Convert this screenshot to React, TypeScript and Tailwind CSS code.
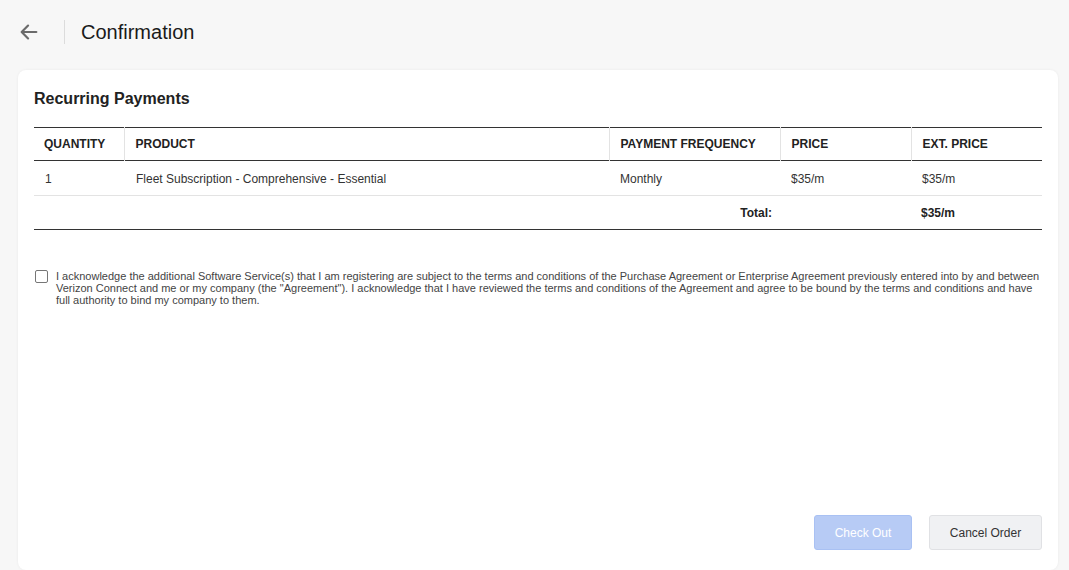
import React from 'react';

const rows = [
  { qty: '1', product: 'Fleet Subscription - Comprehensive - Essential', freq: 'Monthly', price: '$35/m', ext: '$35/m' },
];

const ArrowLeft: React.FC = () => (
  <svg width="22" height="22" viewBox="0 0 24 24" fill="none" stroke="#6b6b6b" strokeWidth="2.4" strokeLinecap="round" strokeLinejoin="round">
    <path d="M20 12H4.5" />
    <path d="M11 5l-7 7 7 7" />
  </svg>
);

export default function App() {
  return (
    <div className="min-h-[570px] h-[570px] bg-[#f7f7f7] pl-[18px] pr-[11px] flex flex-col overflow-hidden" style={{ fontFamily: '"Liberation Sans", Arial, sans-serif' }}>
      {/* header */}
      <div className="h-[64px] flex items-center shrink-0">
        <button className="w-[22px] h-[22px] flex items-center justify-center">
          <ArrowLeft />
        </button>
        <div className="w-px h-[24px] bg-[#dcdcdc] ml-[24px] mr-[16px]" />
        <h1 className="text-[20px] text-[#1a1a1a] leading-none">Confirmation</h1>
      </div>

      {/* card */}
      <div className="mt-[6px] flex-1 bg-white rounded-[8px] shadow-[0_0_3px_rgba(0,0,0,0.06)] px-[16px] pt-[19px] pb-[20px] flex flex-col">
        <h2 className="text-[16px] font-bold text-[#222] leading-[20px]">Recurring Payments</h2>

        <table className="w-full mt-[18px] border-collapse text-[12px] text-[#333]">
          <thead>
            <tr className="border-t border-b border-[#333] h-[33px]">
              <th className="w-[90px] text-left font-bold text-[#222] pl-[10px] border-r border-[#e3e3e3]">QUANTITY</th>
              <th className="w-[485px] text-left font-bold text-[#222] pl-[11px] border-r border-[#e3e3e3]">PRODUCT</th>
              <th className="w-[171px] text-left font-bold text-[#222] pl-[11px] border-r border-[#e3e3e3]">PAYMENT FREQUENCY</th>
              <th className="w-[131px] text-left font-bold text-[#222] pl-[11px] border-r border-[#e3e3e3]">PRICE</th>
              <th className="text-left font-bold text-[#222] pl-[11px]">EXT. PRICE</th>
            </tr>
          </thead>
          <tbody>
            {rows.map((r, i) => (
              <tr key={i} className="border-b border-[#e3e3e3] h-[35px]">
                <td className="pl-[11px] pt-[2px]">{r.qty}</td>
                <td className="pl-[12px] pt-[2px]">{r.product}</td>
                <td className="pl-[11px] pt-[2px]">{r.freq}</td>
                <td className="pl-[11px] pt-[2px]">{r.price}</td>
                <td className="pl-[11px] pt-[2px]">{r.ext}</td>
              </tr>
            ))}
            <tr className="border-b border-[#333] h-[34px]">
              <td colSpan={3} className="text-right pr-[8px] font-bold text-[#222]">Total:</td>
              <td />
              <td className="pl-[10px] font-bold text-[#222]">$35/m</td>
            </tr>
          </tbody>
        </table>

        <label className="mt-[39px] flex items-start gap-[8px]">
          <span className="mt-[1px] w-[13px] h-[13px] shrink-0 border border-[#767676] rounded-[2px] bg-white ml-[1px]" />
          <span className="text-[11px] leading-[12px] text-[#444] pt-[1px]">
            I acknowledge the additional Software Service(s) that I am registering are subject to the terms and conditions of the Purchase Agreement or Enterprise Agreement previously entered into by and between Verizon Connect and me or my company (the "Agreement"). I acknowledge that I have reviewed the terms and conditions of the Agreement and agree to be bound by the terms and conditions and have full authority to bind my company to them.
          </span>
        </label>

        <div className="mt-auto flex justify-end gap-[17px]">
          <button disabled className="w-[98px] h-[35px] rounded-[3px] bg-[#b7cbf5] border border-[#a9c1f3] text-white text-[12px]">Check Out</button>
          <button className="w-[113px] h-[35px] rounded-[3px] bg-[#f0f1f3] border border-[#e0e1e4] text-[#333] text-[12px]">Cancel Order</button>
        </div>
      </div>
    </div>
  );
}
